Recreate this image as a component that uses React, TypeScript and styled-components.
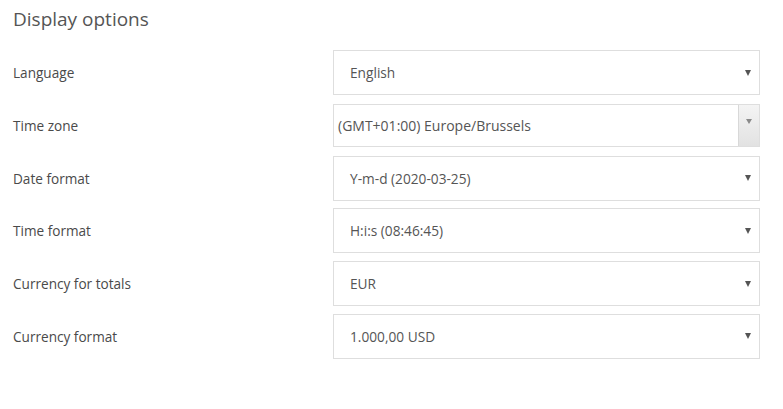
import styled, {createGlobalStyle} from "styled-components";

const GlobalStyle = createGlobalStyle`
  html, body {
    margin: 0;
    padding: 0;
    background: #ffffff;
  }
  body {
    font-family: "Open Sans", "Liberation Sans", sans-serif;
    color: #555555;
  }
`

const Page = styled.div`
  width: 783px;
  height: 409px;
  box-sizing: border-box;
  padding: 5px 0 0 13px;
`

const Title = styled.h2`
  margin: 0 0 17px 0;
  font-size: 19px;
  font-weight: 400;
  line-height: 28px;
  color: #555555;
`

const Form = styled.div`
  display: flex;
  flex-direction: column;
  gap: 8px;
`

const Row = styled.div`
  display: grid;
  grid-template-columns: 320px 427px;
  align-items: center;
  height: 44.8px;
`

const Label = styled.label`
  font-size: 13.6px;
  color: #4a4a4a;
`

const SelectBox = styled.div<{ $native?: boolean }>`
  position: relative;
  box-sizing: border-box;
  height: ${({$native}) => ($native ? "43px" : "45px")};
  border: 1px solid #dedede;
  background: #ffffff;
  display: flex;
  align-items: center;
  padding-left: ${({$native}) => ($native ? "4px" : "16px")};
  font-size: ${({$native}) => ($native ? "14px" : "13.7px")};
  color: #555555;
`

const Caret = styled.span`
  position: absolute;
  right: 8px;
  top: 50%;
  margin-top: -3px;
  width: 0;
  height: 0;
  border-left: 3.5px solid transparent;
  border-right: 3.5px solid transparent;
  border-top: 6px solid #555555;
`

const NativeButton = styled.span`
  position: absolute;
  right: 0;
  top: 0;
  bottom: 0;
  width: 21px;
  border-left: 1px solid #d8d8d8;
  background: linear-gradient(to bottom, #f4f4f4, #e2e2e2);
  display: flex;
  justify-content: center;
  padding-top: 14px;
  box-sizing: border-box;

  &::after {
    content: "";
    width: 0;
    height: 0;
    border-left: 3px solid transparent;
    border-right: 3px solid transparent;
    border-top: 5px solid #8a8a8a;
  }
`

type Option = {
  label: string
  value: string
  native?: boolean
}

const options: Option[] = [
  {label: "Language", value: "English"},
  {label: "Time zone", value: "(GMT+01:00) Europe/Brussels", native: true},
  {label: "Date format", value: "Y-m-d (2020-03-25)"},
  {label: "Time format", value: "H:i:s (08:46:45)"},
  {label: "Currency for totals", value: "EUR"},
  {label: "Currency format", value: "1.000,00 USD"},
]

export default function App() {
  return (
    <>
      <GlobalStyle/>
      <Page>
        <Title>Display options</Title>
        <Form>
          {options.map((option) => (
            <Row key={option.label}>
              <Label>{option.label}</Label>
              <SelectBox $native={option.native}>
                {option.value}
                {option.native ? <NativeButton/> : <Caret/>}
              </SelectBox>
            </Row>
          ))}
        </Form>
      </Page>
    </>
  )
}
